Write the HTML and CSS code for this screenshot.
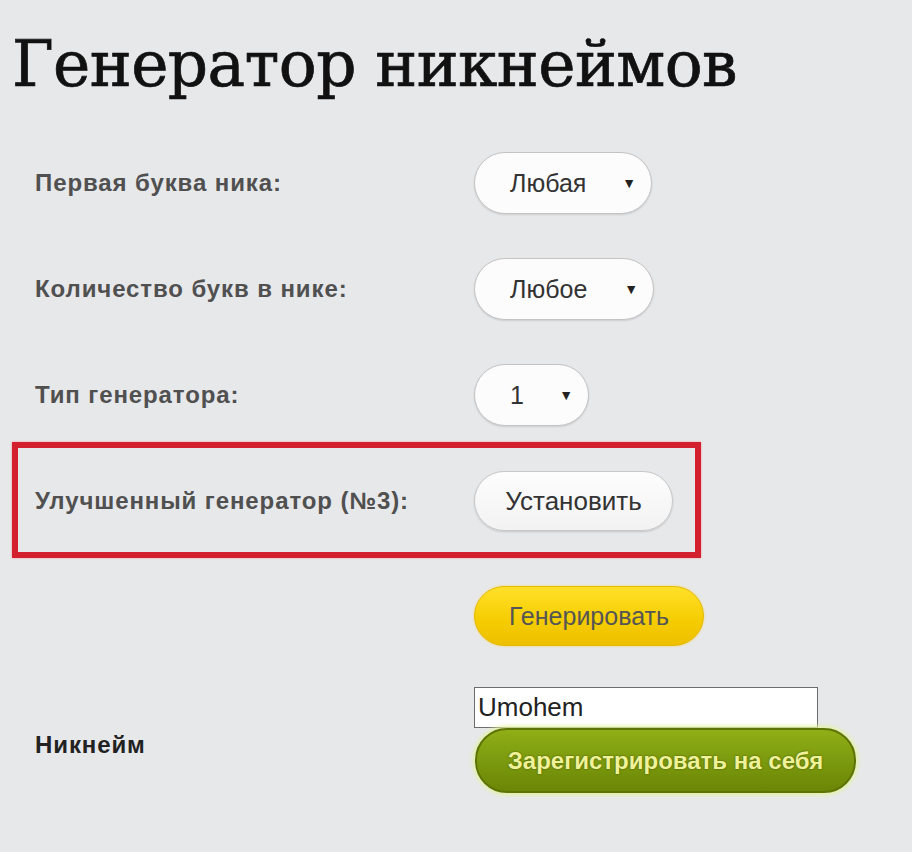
FILE: index.html
```html
<!DOCTYPE html>
<html lang="ru">
<head>
    <meta charset="UTF-8">
    <title>Генератор никнеймов</title>
    <link rel="stylesheet" href="styles.css">
</head>
<body>
<div class="page">
    <h1 class="title">Генератор никнеймов</h1>

    <div class="row row-first">
        <div class="label">Первая буква ника:</div>
        <div class="select select-wide"><span>Любая</span><span class="arrow">&#9660;</span></div>
    </div>
    <div class="row row-gap">
        <div class="label">Количество букв в нике:</div>
        <div class="select select-wider"><span>Любое</span><span class="arrow">&#9660;</span></div>
    </div>
    <div class="row row-gap">
        <div class="label">Тип генератора:</div>
        <div class="select select-small"><span>1</span><span class="arrow">&#9660;</span></div>
    </div>

    <div class="highlight">
        <div class="row">
            <div class="label">Улучшенный генератор (№3):</div>
            <button class="btn btn-white">Установить</button>
        </div>
    </div>

    <div class="row row-gen">
        <div class="label"></div>
        <button class="btn btn-yellow">Генерировать</button>
    </div>

    <div class="row row-nick">
        <div class="label label-dark">Никнейм</div>
        <div class="nick-box">
            <input class="nick-input" type="text" value="Umohem">
            <button class="btn btn-green">Зарегистрировать на себя</button>
        </div>
    </div>
</div>
</body>
</html>
```
FILE: styles.css
```css
* {
    margin: 0;
    padding: 0;
    box-sizing: border-box;
}

body {
    background: #e7e8ea;
    font-family: "Liberation Sans", Arial, sans-serif;
    color: #444;
}

.page {
    width: 912px;
    height: 852px;
    padding: 0 12px;
}

.title {
    font-family: "DejaVu Serif", "Liberation Serif", serif;
    font-weight: normal;
    font-size: 63px;
    line-height: 70px;
    color: #111;
    padding-top: 30px;
    letter-spacing: -0.6px;
    -webkit-text-stroke: 0.7px #111;
}

.row {
    display: grid;
    grid-template-columns: 439px auto;
    align-items: center;
    padding-left: 23px;
    height: 62px;
}

.row-first {
    margin-top: 52px;
}

.row-gap {
    margin-top: 44px;
}

.label {
    font-size: 24px;
    font-weight: bold;
    letter-spacing: 0.9px;
    color: #505050;
}

.label-dark {
    color: #222;
}

.select {
    display: flex;
    align-items: center;
    justify-content: space-between;
    height: 62px;
    padding: 0 15px 0 35px;
    background: #fcfcfc;
    border: 1px solid #c4c4c4;
    border-radius: 31px;
    box-shadow: 0 1px 2px rgba(0, 0, 0, 0.12);
    font-size: 25px;
    color: #333;
}

.select-wide {
    width: 178px;
}

.select-wider {
    width: 180px;
}

.select-small {
    width: 115px;
}

.arrow {
    font-size: 14px;
    color: #222;
}

.highlight {
    margin-top: 16px;
    border: 6px solid #d3202f;
    width: 689px;
    height: 116px;
    padding-top: 23px;
    box-shadow: 0 0 2px #f29aa0;
}

.highlight .row {
    padding-left: 17px;
    height: 60px;
}

.btn {
    font-family: "Liberation Sans", Arial, sans-serif;
    font-size: 25px;
    border-radius: 32px;
    cursor: pointer;
}

.btn-white {
    width: 199px;
    height: 60px;
    background: linear-gradient(#fdfdfd, #f2f2f2);
    border: 1px solid #c8c8c8;
    box-shadow: 0 1px 2px rgba(0, 0, 0, 0.15);
    font-size: 26px;
    color: #333;
}

.row-gen {
    margin-top: 28px;
    height: 60px;
}

.btn-yellow {
    width: 230px;
    height: 60px;
    background: linear-gradient(#ffe02a, #f5cc00 60%, #eebf00);
    border: 1px solid #e6b800;
    box-shadow: 0 0 3px #f6dc7a;
    color: #555;
}

.row-nick {
    margin-top: 41px;
    height: 106px;
    align-items: start;
}

.row-nick .label {
    margin-top: 44px;
}

.nick-box {
    display: flex;
    flex-direction: column;
}

.nick-input {
    width: 344px;
    height: 41px;
    border: 1px solid #6c6c6c;
    background: #fff;
    font-family: "Liberation Sans", Arial, sans-serif;
    font-size: 26px;
    color: #222;
    padding: 0 3px;
    outline: none;
}

.btn-green {
    margin-left: 1px;
    width: 381px;
    height: 65px;
    background: linear-gradient(#8fae16, #7c9a0e 50%, #6b8606);
    border: 2px solid #5d7404;
    box-shadow: 0 0 4px 2px #e3f3a0;
    font-size: 24px;
    font-weight: bold;
    color: #f0f29a;
    text-shadow: 0 0 2px #3d4d00;
}
```
